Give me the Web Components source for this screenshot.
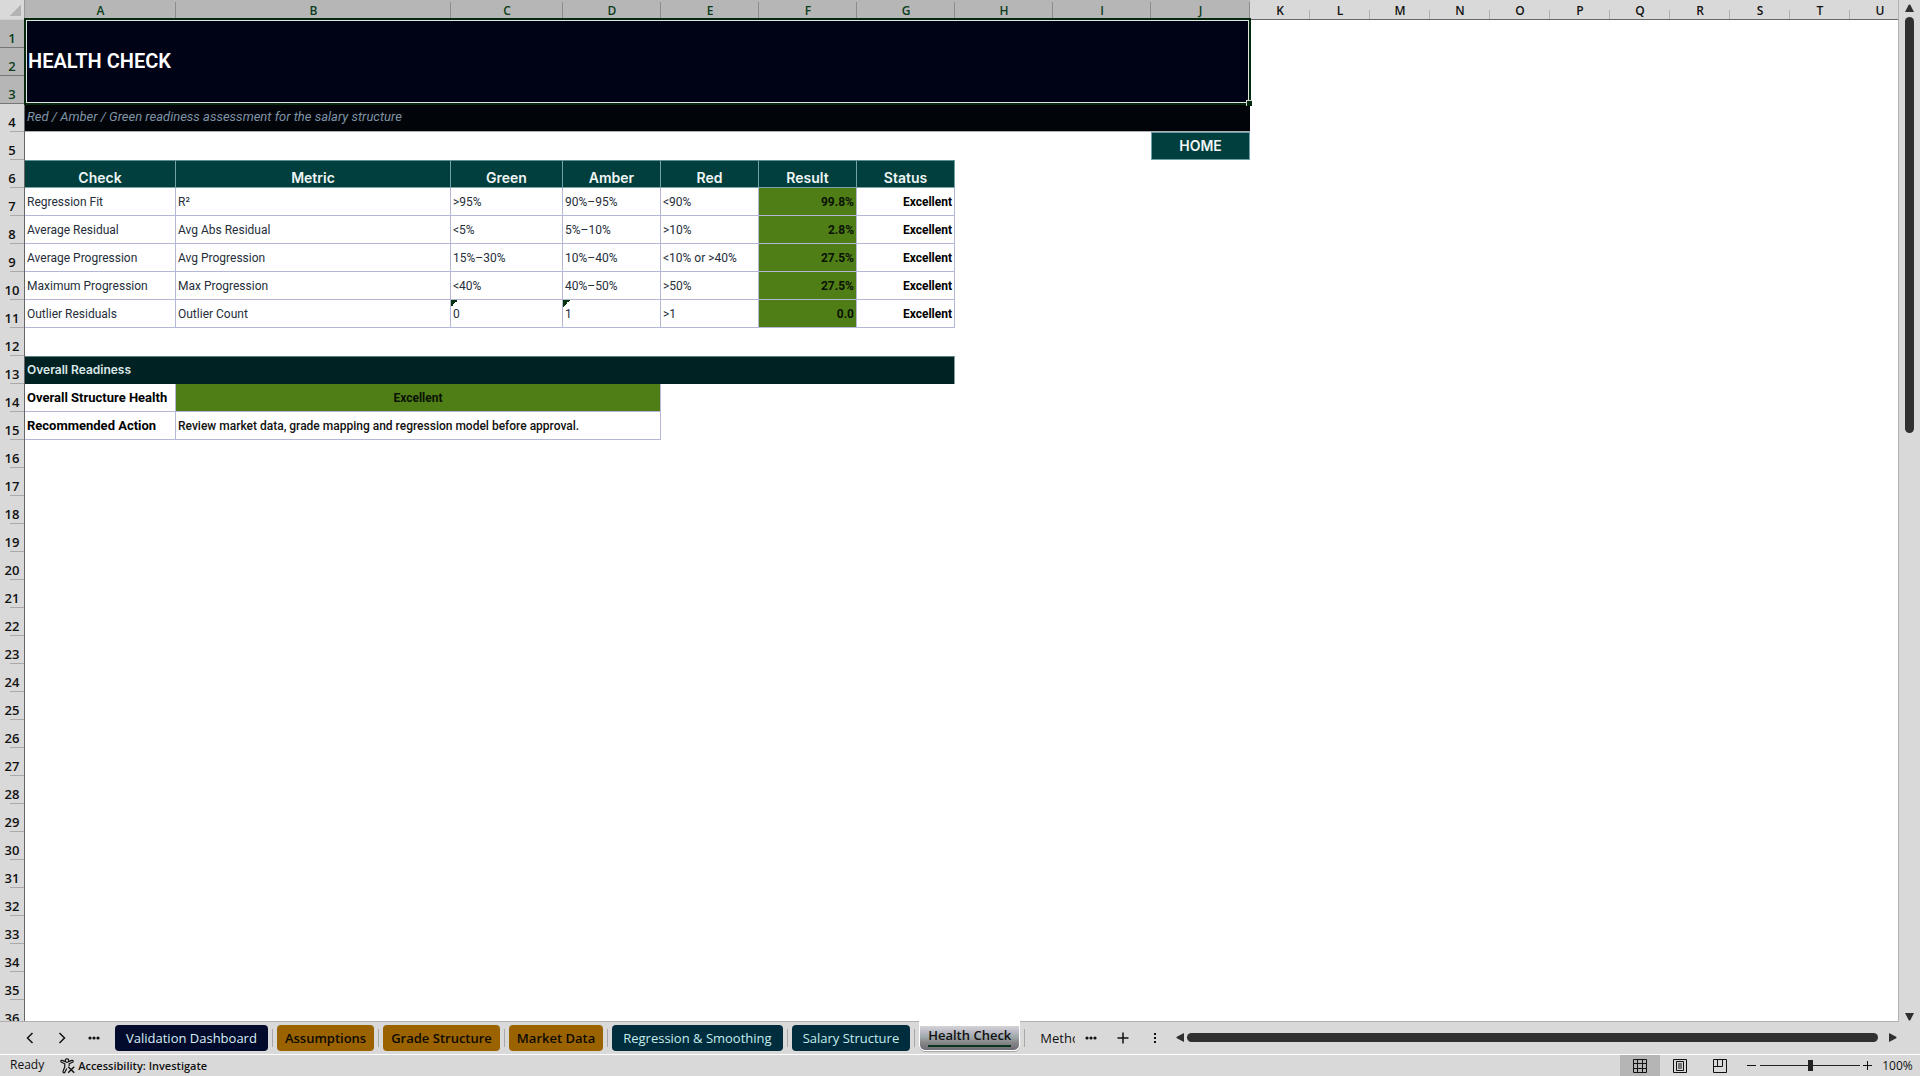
<!DOCTYPE html>
<html lang="en">
<head>
<meta charset="utf-8">
<title>Health Check</title>
<style>
  html, body { height: 100%; margin: 0; }
  body {
    background: #d9d9d9;
    color: #111;
    font-family: Roboto, "Liberation Sans", sans-serif;
    overflow: hidden;
  }
</style>
</head>
<body>
<workbook-app>
  <sheet-grid slot="sheet"></sheet-grid>
  <scroll-bar slot="vertical" direction="vertical" size="42%"></scroll-bar>
  <sheet-tabs slot="tabs">
    <sheet-tab tone="navy">Validation Dashboard</sheet-tab>
    <sheet-tab tone="amber">Assumptions</sheet-tab>
    <sheet-tab tone="amber">Grade Structure</sheet-tab>
    <sheet-tab tone="amber">Market Data</sheet-tab>
    <sheet-tab tone="teal">Regression &amp; Smoothing</sheet-tab>
    <sheet-tab tone="teal">Salary Structure</sheet-tab>
    <sheet-tab active>Health Check</sheet-tab>
    <sheet-tab tone="plain" cut>Metho</sheet-tab>
  </sheet-tabs>
  <scroll-bar slot="horizontal" direction="horizontal" size="100%"></scroll-bar>
  <status-bar slot="status">Ready</status-bar>
</workbook-app>

<script>
class WorkbookApp extends HTMLElement {
  constructor() {
    super();
    this.attachShadow({ mode: "open" });
    this.shadowRoot.innerHTML = `
      <style>
        :host { display: flex; flex-direction: column; height: 100vh; background: #d9d9d9; }
        .main { display: flex; flex: 1; min-height: 0; }
        .bottom { display: flex; align-items: stretch; height: 32px; border-bottom: 1px solid #fff; }
        ::slotted(sheet-grid) { flex: 1; min-width: 0; }
        ::slotted([slot="horizontal"]) { flex: 1; min-width: 0; }
      </style>
      <div class="main">
        <slot name="sheet"></slot>
        <slot name="vertical"></slot>
      </div>
      <div class="bottom">
        <slot name="tabs"></slot>
        <slot name="horizontal"></slot>
      </div>
      <slot name="status"></slot>
    `;
  }
}

const COLUMNS = [
  ["A", 151], ["B", 275], ["C", 112], ["D", 98], ["E", 98], ["F", 98], ["G", 98],
  ["H", 98], ["I", 98], ["J", 99], ["K", 60], ["L", 60], ["M", 60], ["N", 60],
  ["O", 60], ["P", 60], ["Q", 60], ["R", 60], ["S", 60], ["T", 60], ["U", 60],
];
const ROW_COUNT = 36;
const SELECTED_COLUMNS = 10;
const SELECTED_ROWS = 3;

const check = (name, metric, green, amber, red, result, warn = "") => [
  { text: name, cls: "box" },
  { text: metric, cls: "box" },
  { text: green, cls: `box ${warn}` },
  { text: amber, cls: `box ${warn}` },
  { text: red, cls: "box" },
  { text: result, cls: "box result" },
  { text: "Excellent", cls: "box status" },
];

const CELLS = {
  1: [{ text: "HEALTH CHECK", cls: "title", span: 10, rows: 3 }],
  2: [{ skip: 10 }],
  3: [{ skip: 10 }],
  4: [{ text: "Red / Amber / Green readiness assessment for the salary structure", cls: "subtitle", span: 10 }],
  5: [{ text: "", span: 9 }, { text: `<a href="#home">HOME</a>`, cls: "home" }],
  6: ["Check", "Metric", "Green", "Amber", "Red", "Result", "Status"].map((text) => ({ text, cls: "head" })),
  7: check("Regression Fit", "R²", "&gt;95%", "90%–95%", "&lt;90%", "99.8%"),
  8: check("Average Residual", "Avg Abs Residual", "&lt;5%", "5%–10%", "&gt;10%", "2.8%"),
  9: check("Average Progression", "Avg Progression", "15%–30%", "10%–40%", "&lt;10% or &gt;40%", "27.5%"),
  10: check("Maximum Progression", "Max Progression", "&lt;40%", "40%–50%", "&gt;50%", "27.5%"),
  11: check("Outlier Residuals", "Outlier Count", "0", "1", "&gt;1", "0.0", "warn"),
  13: [{ text: "Overall Readiness", cls: "section", span: 7 }],
  14: [{ text: "Overall Structure Health", cls: "box label" }, { text: "Excellent", cls: "box overall", span: 3 }],
  15: [
    { text: "Recommended Action", cls: "box label" },
    { text: "Review market data, grade mapping and regression model before approval.", cls: "box action", span: 3 },
  ],
};

class SheetGrid extends HTMLElement {
  constructor() {
    super();
    this.attachShadow({ mode: "open" });
  }

  connectedCallback() {
    this.render();
  }

  rowHtml(number) {
    let used = 0;
    let html = "";
    for (const cell of CELLS[number] || []) {
      if (cell.skip) {
        used += cell.skip;
        continue;
      }
      const span = cell.span || 1;
      used += span;
      const mark = cell.cls === "title" ? `<span class="selection"></span>` : "";
      const tag = cell.cls === "head" ? "th" : "td";
      html += `<${tag} class="${cell.cls || ""}" colspan="${span}" rowspan="${cell.rows || 1}">${cell.text}${mark}</${tag}>`;
    }
    html += `<td colspan="${COLUMNS.length - used}"></td>`;
    const selected = number <= SELECTED_ROWS ? "selected" : "";
    return `<tr><th scope="row" class="row-head ${selected}">${number}</th>${html}</tr>`;
  }

  render() {
    const cols = COLUMNS.map(([, width]) => `<col style="width:${width}px">`).join("");
    const total = COLUMNS.reduce((sum, [, width]) => sum + width, 25);
    const heads = COLUMNS.map(([name], i) =>
      `<th scope="col" class="col-head ${i < SELECTED_COLUMNS ? "selected" : ""}">${name}</th>`).join("");
    let rows = "";
    for (let n = 1; n <= ROW_COUNT; n++) rows += this.rowHtml(n);

    this.shadowRoot.innerHTML = `
      <style>
        :host { display: block; overflow: hidden; background: #fff; border-right: 1px solid #b0b0b0; border-bottom: 1px solid #b0b0b0; box-sizing: border-box; }
        table { table-layout: fixed; border-collapse: separate; border-spacing: 0; font-size: 12px; line-height: 16px; }
        th, td { box-sizing: border-box; height: 28px; padding: 0 2px; text-align: left; vertical-align: middle; white-space: nowrap; font-weight: 400; }
        thead th, thead td { height: 20px; }
        .corner { background: linear-gradient(135deg, transparent 50%, #b4b4b4 50%) 10px 5px / 11px 11px no-repeat #d9d9d9; border-right: 1px solid #999; border-bottom: 1px solid #d0d0d0; }
        .col-head, .row-head { font: 600 12px/16px "Open Sans", "Noto Sans", sans-serif; text-align: center; color: #111; }
        .col-head { background: linear-gradient(#b0b0b0, #b0b0b0) right bottom / 1px 9px no-repeat #d9d9d9; border-bottom: 1px solid #666; padding-top: 2px; }
        .col-head.selected { background: linear-gradient(#8c8c8c, #8c8c8c) right bottom / 1px 17px no-repeat #b6b6b6; color: #0b3d1c; border-bottom-color: #06280f; }
        .row-head { background: linear-gradient(#aaa, #aaa) right bottom / 14px 1px no-repeat #d9d9d9; border-right: 1px solid #666; vertical-align: bottom; padding: 0 0 2px; font-size: 13px; }
        .row-head.selected { background: linear-gradient(#777, #777) right bottom / 100% 1px no-repeat #b6b6b6; color: #0b3d1c; }
        .title { position: relative; background: #000216; color: #fff; font-size: 20px; line-height: 28px; font-weight: 600; padding: 0 0 2px 3px; }
        .selection { position: absolute; inset: -2px -1px -1px -1px; border: 2px solid #06280f; box-shadow: inset 0 0 0 1px #dfe5df; pointer-events: none; }
        .selection::after { content: ""; position: absolute; right: -3px; bottom: -3px; width: 5px; height: 5px; background: #06280f; border: 1px solid #cfd8cf; border-width: 1px 0 0 1px; }
        .subtitle { background: #010409; color: #7f93a6; font-size: 13px; font-style: italic; border-bottom: 1px solid #b0b0b0; padding-bottom: 2px; }
        .head, .home { background: #003f3d; color: #f0f5f5; font: 600 14px/18px Inter, Roboto, sans-serif; text-align: center; }
        .head { border-right: 1px solid #6fa0a5; border-bottom: 1px solid #7fa3a5; border-top: 1px solid #5d8f94; vertical-align: bottom; }
        .home { border: 1px solid #6f9fa8; }
        .home a { color: inherit; text-decoration: none; }
        .box { border-right: 1px solid #b4b8d6; border-bottom: 1px solid #b4b8d6; color: #262e3a; }
        .warn { background: linear-gradient(135deg, #06320f 50%, transparent 50%) left top / 7px 7px no-repeat; }
        .result, .overall { background: #4f7e17; color: #0a1204; font-weight: 700; }
        .result, .status { text-align: right; }
        .status, .label { color: #000; font-weight: 700; }
        .label { font-size: 13px; padding-right: 0; }
        .overall { text-align: center; }
        .action { color: #111; font-weight: 500; }
        .section { background: #002223; color: #dce8e8; font: 600 12px/16px Inter, Roboto, sans-serif; border-right: 1px solid #7fa3a5; border-top: 1px solid #5d8084; padding-bottom: 2px; }
      </style>
      <table style="width:${total}px">
        <colgroup><col style="width:25px">${cols}</colgroup>
        <thead><tr><td class="corner"></td>${heads}</tr></thead>
        <tbody>${rows}</tbody>
      </table>
    `;
  }
}

class ScrollBar extends HTMLElement {
  constructor() {
    super();
    this.attachShadow({ mode: "open" });
  }

  connectedCallback() {
    const size = this.getAttribute("size") || "50%";
    this.shadowRoot.innerHTML = `
      <style>
        :host { display: flex; align-items: center; box-sizing: border-box; }
        :host([direction="vertical"]) { flex-direction: column; width: 21px; padding: 4px 0 1px; }
        :host([direction="horizontal"]) { padding: 0 23px 2px 5px; gap: 2px; }
        button { display: flex; padding: 0; border: 0; background: none; }
        svg { display: block; fill: #303030; }
        .track { flex: 1; display: flex; box-sizing: border-box; min-width: 0; min-height: 0; }
        .thumb { background: #303030; border-radius: 5px; }
        :host([direction="vertical"]) .track { flex-direction: column; align-self: stretch; padding: 4px 6px; }
        :host([direction="vertical"]) .thumb { height: ${size}; width: 9px; }
        :host([direction="vertical"]) svg { transform: rotate(90deg); }
        :host([direction="horizontal"]) .track { padding-right: 8px; }
        :host([direction="horizontal"]) .thumb { width: ${size}; height: 9px; }
      </style>
      <button type="button" aria-label="Scroll back">
        <svg width="9" height="9" viewBox="0 0 9 9"><path d="M8 0v9L0.8 5.3Q0 4.5 0.8 3.7z"/></svg>
      </button>
      <div class="track"><div class="thumb"></div></div>
      <button type="button" aria-label="Scroll forward">
        <svg width="9" height="9" viewBox="0 0 9 9"><path d="M1 0v9L8.2 5.3Q9 4.5 8.2 3.7z"/></svg>
      </button>
    `;
  }
}

class SheetTabs extends HTMLElement {
  constructor() {
    super();
    this.attachShadow({ mode: "open" });
    this.shadowRoot.innerHTML = `
      <style>
        :host { display: flex; align-items: center; }
        .nav { display: flex; align-items: center; padding: 0 5px 0 14px; }
        nav { display: flex; align-items: stretch; height: 32px; }
        .more { display: flex; align-items: center; }
        button { display: flex; align-items: center; justify-content: center; width: 32px; height: 28px; padding: 0; border: 0; background: none; }
        svg { display: block; fill: none; stroke: #111; stroke-width: 1.5; }
        .dots { fill: #111; stroke: none; }
      </style>
      <div class="nav">
        <button type="button" aria-label="Previous sheet"><svg width="12" height="12" viewBox="0 0 12 12"><path d="M8.5 1L3.5 6l5 5"/></svg></button>
        <button type="button" aria-label="Next sheet"><svg width="12" height="12" viewBox="0 0 12 12"><path d="M3.5 1l5 5-5 5"/></svg></button>
        <button type="button" aria-label="All sheets"><svg class="dots" width="12" height="4" viewBox="0 0 12 4"><circle cx="2" cy="2" r="1.6"/><circle cx="6" cy="2" r="1.6"/><circle cx="10" cy="2" r="1.6"/></svg></button>
      </div>
      <nav aria-label="Sheets"><slot></slot></nav>
      <div class="more">
        <button type="button" aria-label="More sheets"><svg class="dots" width="12" height="4" viewBox="0 0 12 4"><circle cx="2" cy="2" r="1.6"/><circle cx="6" cy="2" r="1.6"/><circle cx="10" cy="2" r="1.6"/></svg></button>
        <button type="button" aria-label="New sheet"><svg width="12" height="12" viewBox="0 0 12 12"><path d="M6 0.5v11M0.5 6h11"/></svg></button>
        <button type="button" aria-label="Resize tabs"><svg class="dots" width="4" height="12" viewBox="0 0 4 12"><path d="M1 1h2v2H1zM1 5h2v2H1zM1 9h2v2H1z"/></svg></button>
      </div>
    `;
  }
}

class SheetTab extends HTMLElement {
  constructor() {
    super();
    this.attachShadow({ mode: "open" });
    this.shadowRoot.innerHTML = `
      <style>
        :host { display: flex; align-items: center; }
        :host::after { content: ""; width: 1px; height: 18px; margin: 0 4px; background: #a8a8a8; }
        button { box-sizing: border-box; height: 26px; padding: 0 11px; border: 0; border-radius: 4px; background: none; color: #111; font: 500 13px/20px "Open Sans", "Noto Sans", sans-serif; white-space: nowrap; }
        :host([tone="navy"]) button { background: #020b2b; color: #d9eef5; font-weight: 400; }
        :host([tone="amber"]) button { background: #9a6300; color: #0d0a02; padding: 0 8px; font-weight: 600; }
        :host([tone="teal"]) button { background: #002d3d; color: #c4ecec; }
        :host([active]) { align-items: stretch; }
        :host([active])::after { align-self: center; }
        :host([active]) .wrap { background: linear-gradient(#fff 5px, transparent 5px); margin-top: -1px; padding-top: 5px; }
        :host([active]) button {
          display: block; height: 25px; padding: 0 8px 3px; border: 1px solid #fff; border-top: 0; border-radius: 0 0 6px 6px;
          background: linear-gradient(#d4d4d6, #b9b9c4 25%, #9fa9ab 45%, #868686 70%, #6c6c78);
          box-shadow: 0 1px 0 #a8a8a8; font-weight: 600;
        }
        :host([active]) button span { display: block; border-bottom: 2px solid #06351b; line-height: 19px; }
        :host([cut])::after { display: none; }
        :host([cut]) button { width: 46px; padding-right: 0; text-align: left; }
        :host([cut]) button span { display: block; overflow: hidden; }
      </style>
      <div class="wrap"><button type="button"><span><slot></slot></span></button></div>
    `;
  }
}

class StatusBar extends HTMLElement {
  constructor() {
    super();
    this.attachShadow({ mode: "open" });
    this.shadowRoot.innerHTML = `
      <style>
        :host { display: flex; align-items: stretch; height: 21px; font: 500 12px/20px "Open Sans", "Noto Sans", sans-serif; color: #111; }
        button { display: flex; align-items: center; justify-content: center; padding: 0; border: 0; background: none; font: inherit; color: inherit; }
        .ready { padding: 0 16px 0 10px; }
        .access { gap: 3px; font-weight: 600; font-size: 11px; }
        .spacer { flex: 1; }
        .view { width: 40px; }
        .view.on { background: #b5b5b5; }
        .zoom { display: flex; align-items: center; padding-left: 4px; }
        .step { width: 15px; height: 20px; }
        svg { display: block; fill: none; stroke: #111; }
        input { appearance: none; width: 100px; height: 12px; margin: 0 0 0 1px; background: linear-gradient(#222, #222) center / 100% 1px no-repeat; }
        input::-webkit-slider-thumb { appearance: none; width: 5px; height: 11px; background: #222; }
        .percent { width: 45px; }
      </style>
      <span class="ready"><slot></slot></span>
      <button type="button" class="access">
        <svg width="15" height="16" viewBox="0 0 15 16" stroke-width="1.2">
          <circle cx="7" cy="2.6" r="1.8"/>
          <path d="M5.3 3.6L2.2 2.4Q0.8 2.2 0.8 3.4 0.9 4 1.6 4.3L4.8 5.8v3L3 13.4q-.2 1.3.9 1.5 .8 0 1.1-.9L6.8 10.4"/>
          <path d="M8.7 3.6l3.1-1.2q1.4-.2 1.4 1 0 .6-.8.9L9.2 5.8V8"/>
          <path d="M8.2 8.8l6 6M14.2 8.8l-6 6" stroke-width="1.4"/>
        </svg>
        Accessibility: Investigate
      </button>
      <span class="spacer"></span>
      <button type="button" class="view on" aria-label="Normal view"><svg width="14" height="14" viewBox="0 0 14 14"><path d="M0.5 0.5h13v13h-13zM4.5 0v14M9.5 0v14M0 4.5h14M0 9.5h14"/></svg></button>
      <button type="button" class="view" aria-label="Page layout"><svg width="14" height="14" viewBox="0 0 14 14"><path d="M0.5 0.5h13v13h-13zM3.5 2.5h7v9h-7zM5 5h4M5 7h4M5 9h4"/></svg></button>
      <button type="button" class="view" aria-label="Page break preview"><svg width="14" height="14" viewBox="0 0 14 14"><path d="M0.5 0.5h13v13h-13zM4.5 0.5v7M9.5 0.5v7H0.5"/></svg></button>
      <div class="zoom">
        <button type="button" class="step" aria-label="Zoom out"><svg width="9" height="9" viewBox="0 0 9 9"><path d="M0 4.5h9"/></svg></button>
        <input type="range" min="0" max="200" value="100" aria-label="Zoom">
        <button type="button" class="step" aria-label="Zoom in"><svg width="9" height="9" viewBox="0 0 9 9"><path d="M0 4.5h9M4.5 0v9"/></svg></button>
      </div>
      <button type="button" class="percent">100%</button>
    `;
  }
}

customElements.define("workbook-app", WorkbookApp);
customElements.define("sheet-grid", SheetGrid);
customElements.define("scroll-bar", ScrollBar);
customElements.define("sheet-tabs", SheetTabs);
customElements.define("sheet-tab", SheetTab);
customElements.define("status-bar", StatusBar);
</script>
</body>
</html>
